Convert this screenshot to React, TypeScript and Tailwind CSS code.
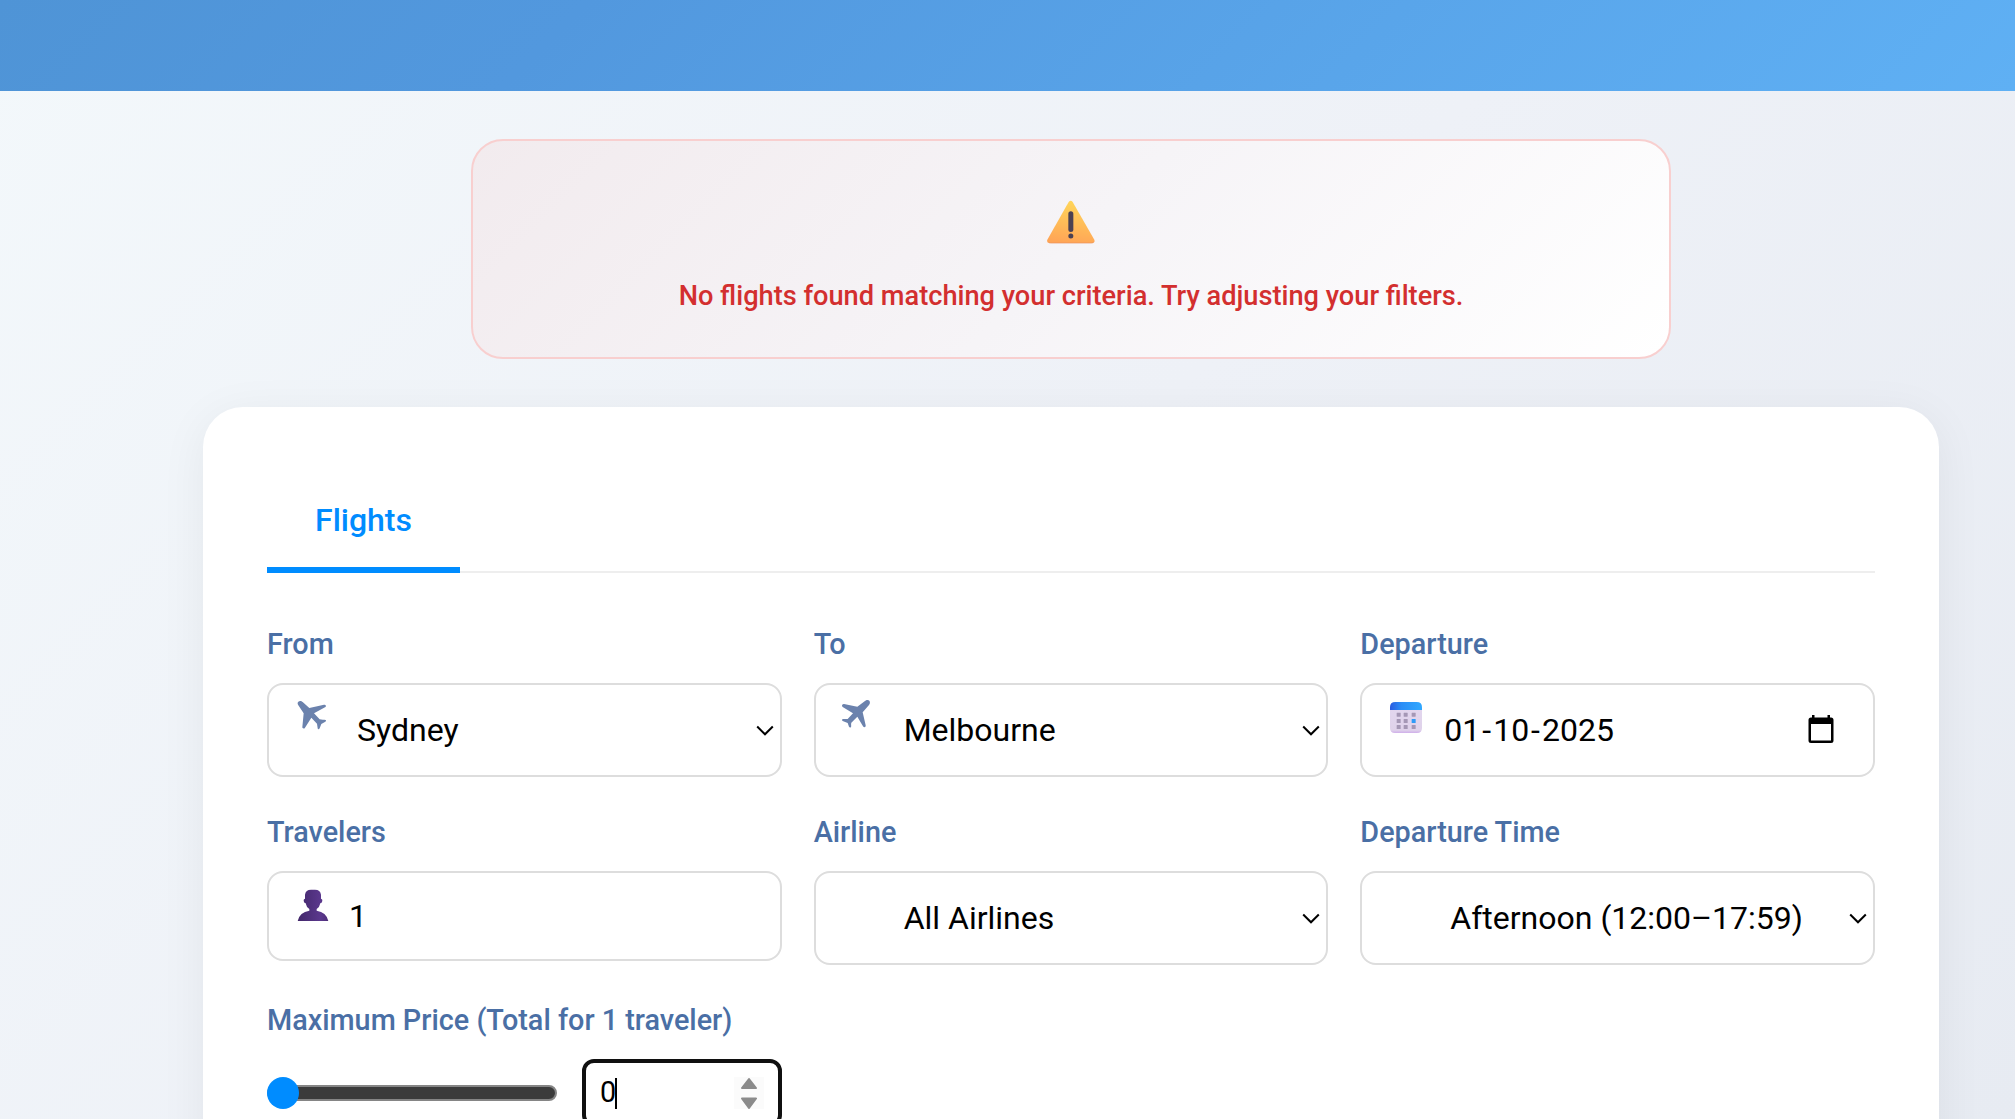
import type { ReactNode } from "react";

function WarningIcon() {
  return (
    <svg width="48" height="44" viewBox="0 0 144 132">
      <defs>
        <linearGradient id="warn" x1="0.6" y1="0" x2="0.45" y2="1">
          <stop offset="0" stopColor="#ffd659" />
          <stop offset="0.5" stopColor="#ffbe58" />
          <stop offset="1" stopColor="#ffa556" />
        </linearGradient>
      </defs>
      <path d="M65 6Q71 -2 77 6L142 119Q145 128 136 129H7Q-2 128 1 119Z" fill="url(#warn)" />
      <path d="M4 126Q6 129 10 129H134Q139 129 141 125" fill="none" stroke="#e98f5a" strokeWidth="2" />
      <rect x="64" y="34" width="15" height="62" rx="7.5" fill="#4b4152" />
      <circle cx="71.500" cy="108" r="7.500" fill="#4b4152" />
    </svg>
  );
}

function ArrivingPlane() {
  return (
    <svg width="30" height="30" viewBox="36 30 90 90" fill="#6b82ad">
      <path d="M40 35C44 31 50 33 53 36L73 54L117 44C123 44 125 49 120 52L87 70L104 88C110 90 117 88 122 90C124 92 123 94 121 95L109 102L104 115C102 119 98 118 98 115L96 101L79 83L60 113C58 117 52 116 52 112L56 70L41 47C37 42 37 38 40 35Z" />
    </svg>
  );
}

function DepartingPlane() {
  return (
    <svg width="30" height="30" viewBox="33 27 90 90" fill="#6b82ad">
      <path d="M118 32C121 36 120 41 117 45L98 67L107 106C108 112 102 114 99 109L82 80L64 98C62 103 65 108 63 111C61 114 58 112 57 110L53 99L38 93C35 91 36 87 39 87L53 87L69 70L38 51C34 48 36 42 42 42L82 50L104 34C109 29 115 29 118 32Z" />
    </svg>
  );
}

function CalendarEmoji() {
  const cells = [
    [61, 68], [82, 68], [106, 68],
    [61, 87], [82, 87], [106, 87],
    [61, 105], [82, 105], [106, 105],
  ];
  return (
    <svg width="32" height="32" viewBox="42 36 96 96">
      <defs>
        <linearGradient id="calTop" x1="0" x2="1">
          <stop offset="0" stopColor="#2b5be0" />
          <stop offset="0.35" stopColor="#2b8df6" />
          <stop offset="1" stopColor="#31a8ff" />
        </linearGradient>
        <linearGradient id="calBody" x1="0" y1="0" x2="0" y2="1">
          <stop offset="0" stopColor="#e2d6ee" />
          <stop offset="0.88" stopColor="#dfd2ea" />
          <stop offset="1" stopColor="#cfaeea" />
        </linearGradient>
      </defs>
      <path d="M42 58H138V114Q138 129 123 129H57Q42 129 42 114Z" fill="url(#calBody)" />
      <path d="M42 60V52Q42 36 58 36H122Q138 36 138 52V60Z" fill="url(#calTop)" />
      {cells.map(([x, y], i) => (
        <rect key={i} x={x + 1} y={y} width="12" height="12" rx="1" fill={i === 5 ? "#2f9bf7" : "#a597b5"} />
      ))}
    </svg>
  );
}

function PersonIcon() {
  return (
    <svg width="32" height="32" viewBox="36 27 96 96">
      <defs>
        <linearGradient id="person" x1="0" x2="1">
          <stop offset="0" stopColor="#42276a" />
          <stop offset="0.75" stopColor="#5b388d" />
          <stop offset="1" stopColor="#4d2d78" />
        </linearGradient>
      </defs>
      <path
        d="M60 44Q62 29 78 29H90Q106 29 108 44V56Q113 57 112 62Q112 69 106 70Q104 82 95 87V92Q124 96 130 123H38Q44 96 73 92V87Q64 82 62 70Q56 69 56 62Q55 57 60 56Z"
        fill="url(#person)"
      />
    </svg>
  );
}

function Chevron() {
  return (
    <svg className="mt-[2px]" width="18" height="12" viewBox="0 0 18 12" fill="none" stroke="#000" strokeWidth="2">
      <path d="M1.200 1.500L9 9.300L16.800 1.500" />
    </svg>
  );
}

function PickerIcon() {
  return (
    <svg className="mb-[2px]" width="26" height="28" viewBox="0 0 26 28">
      <path
        fillRule="evenodd"
        d="M4 0H6.500V2.500H19.500V0H22V2.500H23Q25.500 2.500 25.500 5V25.500Q25.500 28 23 28H3Q0.500 28 0.500 25.500V5Q0.500 2.500 3 2.500H4ZM3 9V25.500H23V9Z"
      />
    </svg>
  );
}

type FieldProps = {
  label: string;
  value: ReactNode;
  icon?: ReactNode;
  iconClass?: string;
  boxClass: string;
  trailing?: ReactNode;
};

function Field({ label, value, icon, iconClass, boxClass, trailing }: FieldProps) {
  return (
    <div className="flex h-[188px] flex-col">
      <div className="mb-[18px] h-[42px] text-[28.8px] leading-[42px] font-medium text-[#4a6fa5]">{label}</div>
      <div
        className={`relative flex items-center justify-between rounded-2xl border-2 border-[#ddd] bg-white text-[32px] leading-[38px] text-black ${boxClass}`}
      >
        {icon && <span className={`absolute ${iconClass}`}>{icon}</span>}
        <span className="whitespace-nowrap">{value}</span>
        {trailing}
      </div>
    </div>
  );
}

export default function App() {
  return (
    <div className="flex h-[1119px] w-[2015px] flex-col overflow-hidden bg-[linear-gradient(135deg,#f3f8fb_0%,#eef1f7_50%,#e7ebf2_100%)] font-[Roboto,sans-serif]">
      <header className="h-[91px] shrink-0 bg-[linear-gradient(135deg,#4f94d6_0%,#5298de_28%,#5fb0f4_100%)]" />

      <div className="mt-12 ml-[471px] flex h-[220px] w-[1200px] shrink-0 flex-col items-center rounded-[32px] border-2 border-[#f8cfcf] bg-[linear-gradient(135deg,#f2ebee_0%,#f6f4f7_50%,#ffffff_100%)] pt-[59px]">
        <WarningIcon />
        <p className="mt-[33px] text-[27.2px] leading-[38px] font-medium text-[#d32f2f]">
          No flights found matching your criteria. Try adjusting your filters.
        </p>
      </div>

      <main className="mt-12 ml-[203px] h-[900px] w-[1736px] shrink-0 rounded-[40px] bg-white px-16 pt-16 shadow-[0_8px_48px_rgba(0,0,0,0.06)]">
        <nav className="flex h-[102px] border-b-2 border-[#eee]">
          <div className="flex h-[102px] w-[193px] items-center justify-center border-b-[6px] border-[#008cff] pt-[2px] text-[32px] leading-[38px] font-medium text-[#008cff]">
            Flights
          </div>
        </nav>

        <div className="mt-[50px] grid grid-cols-3 gap-x-8">
          <Field label="From" value="Sydney" icon={<ArrivingPlane />} iconClass="left-[28px] top-[15px]" boxClass="h-[94px] pl-[88px] pr-[6px]" trailing={<Chevron />} />
          <Field label="To" value="Melbourne" icon={<DepartingPlane />} iconClass="left-[25px] top-[14px]" boxClass="h-[94px] pl-[88px] pr-[6px]" trailing={<Chevron />} />
          <Field
            label="Departure"
            value={
              <>
                01<span className="mx-[2px]">-</span>10<span className="mx-[2px]">-</span>2025
              </>
            }
            icon={<CalendarEmoji />}
            iconClass="left-[28px] top-[17px]"
            boxClass="h-[94px] pl-[82px] pr-[39px]"
            trailing={<PickerIcon />}
          />
          <Field label="Travelers" value="1" icon={<PersonIcon />} iconClass="left-[28px] top-[16px]" boxClass="h-[90px] pl-[80px]" />
          <Field label="Airline" value="All Airlines" boxClass="h-[94px] pl-[88px] pr-[6px]" trailing={<Chevron />} />
          <Field label="Departure Time" value="Afternoon (12:00–17:59)" boxClass="h-[94px] pl-[88px] pr-[6px]" trailing={<Chevron />} />
        </div>

        <section className="w-[515px]">
          <div className="mb-[18px] h-[42px] text-[28.8px] leading-[42px] font-medium text-[#4a6fa5]">
            Maximum Price (Total for 1 traveler)
          </div>
          <div className="flex h-[68px] items-center justify-between">
            <div className="relative h-4 w-[290px] rounded-full border-2 border-[#858585] bg-[#3b3b3b]">
              <span className="absolute -top-[10px] -left-[2px] size-8 rounded-full bg-[#008cff]" />
            </div>
            <div className="flex h-[68px] w-[200px] items-center justify-between rounded-[12px] border-4 border-[#101010] bg-white pr-[14px] pl-[14px] text-[28.8px] leading-[34px] text-black">
              <span className="flex items-center">
                <span className="pb-[2px]">0</span>
                <span className="-ml-px h-[31px] w-[2px] bg-black" />
              </span>
              <svg width="30" height="32" viewBox="0 0 30 32" fill="#8b8b8b" stroke="#8b8b8b" strokeWidth="2" strokeLinejoin="round">
                <rect width="30" height="32" fill="#fbfbfb" stroke="none" />
                <path d="M15 2L22 11H8Z" />
                <path d="M15 31L22 21.500H8Z" />
              </svg>
            </div>
          </div>
        </section>
      </main>
    </div>
  );
}
